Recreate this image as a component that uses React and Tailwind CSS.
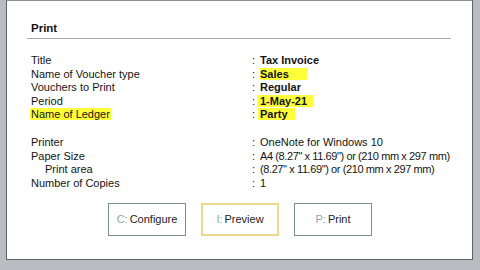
import React from "react";

const rows1 = [
  { l: "Title", v: "Tax Invoice" },
  { l: "Name of Voucher type", v: "Sales", hv: "pr-[18px]" },
  { l: "Vouchers to Print", v: "Regular" },
  { l: "Period", v: "1-May-21", hv: "pr-[7px] -ml-[3px] pl-[3px]" },
  { l: "Name of Ledger", v: "Party", hl: true, hv: "pr-[7px] -ml-[2px] pl-[2px]" },
];

const rows2 = [
  { l: "Printer", v: "OneNote for Windows 10" },
  { l: "Paper Size", v: "A4 (8.27\" x 11.69\") or (210 mm x 297 mm)", tight: true },
  { l: "Print area", v: "(8.27\" x 11.69\") or (210 mm x 297 mm)", indent: true, tight: true },
  { l: "Number of Copies", v: "1" },
];

function Row({ r, bold }) {
  return (
    <div className="flex h-[13.5px] leading-[13.5px] whitespace-nowrap">
      <div className={"w-[221px] shrink-0 " + (r.indent ? "pl-[14px]" : "")}>
        {r.hl ? <span className="bg-[#ffff3a] pr-[1px] -ml-[1px] pl-[1px]">{r.l}</span> : r.l}
      </div>
      <div className="w-[8px] shrink-0">:</div>
      <div className={(bold ? "font-bold " : "") + (r.tight ? "tracking-[-0.4px]" : "")}>
        {r.hv ? <span className={"bg-[#ffff3a] " + r.hv}>{r.v}</span> : r.v}
      </div>
    </div>
  );
}

function Btn({ k, t, border }) {
  return (
    <div className={"w-[78px] h-[33px] flex items-center justify-center gap-[2px] bg-white " + border}>
      <span className="text-[#8fa7b3]">{k}</span>
      <span className="text-[#222]">{t}</span>
    </div>
  );
}

export default function App() {
  return (
    <div className="w-[480px] h-[270px] bg-[#b9bdc1] overflow-hidden font-['Liberation_Sans',Arial,sans-serif] text-[11px] text-[#141414]">
      <div className="ml-[6px] w-[467px] h-[260px] bg-white border border-[#5e6266] border-t-[#8a8e92] flex flex-col">
        <div className="ml-[20px] w-[424px] border-b border-[#a8a8a8] pt-[20px] pb-[3px] pl-[4px] leading-[14px] font-bold text-[11.5px]">
          Print
        </div>
        <div className="pl-[24px] mt-[15px]">
          {rows1.map((r) => (
            <Row key={r.l} r={r} bold />
          ))}
          <div className="h-[14.5px]" />
          {rows2.map((r) => (
            <Row key={r.l} r={r} />
          ))}
        </div>
        <div className="mt-[13px] flex justify-center gap-[15px] pl-[1px]">
          <Btn k="C:" t="Configure" border="border border-[#7a8e98]" />
          <Btn k="I:" t="Preview" border="border-2 border-[#ecd98e]" />
          <Btn k="P:" t="Print" border="border border-[#7a8e98]" />
        </div>
      </div>
    </div>
  );
}
